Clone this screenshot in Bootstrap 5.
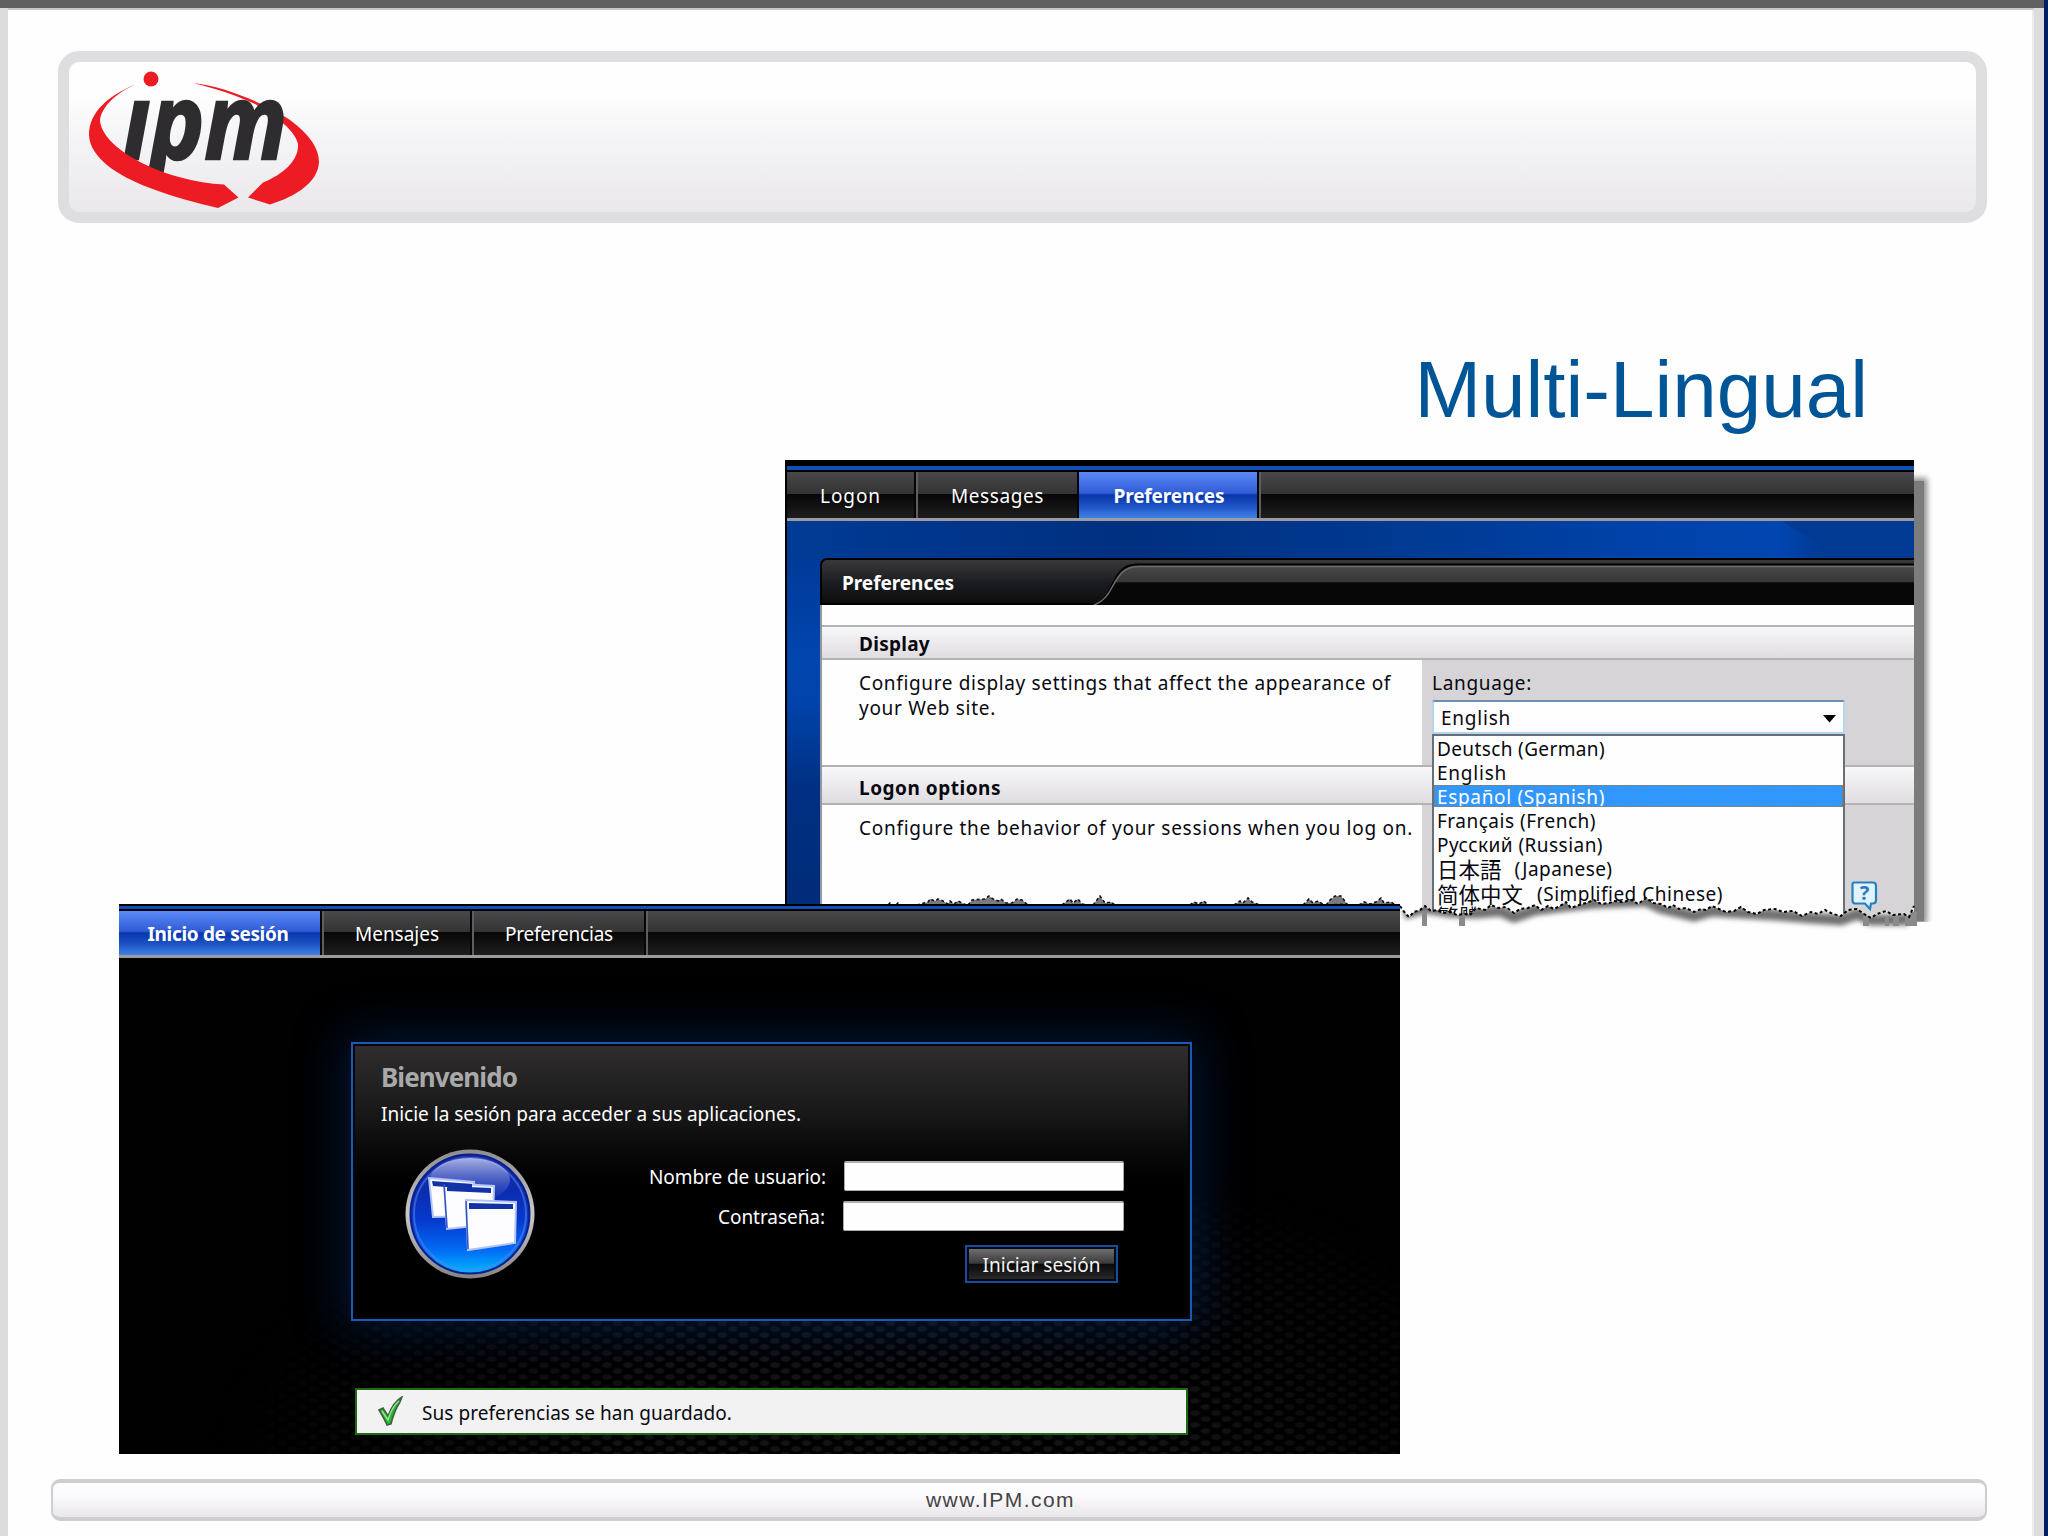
<!DOCTYPE html>
<html lang="en">
<head>
<meta charset="utf-8">
<meta name="viewport" content="width=device-width, initial-scale=1">
<title>Multi-Lingual</title>
<link href="https://cdn.jsdelivr.net/npm/bootstrap@5.3.0/dist/css/bootstrap.min.css" rel="stylesheet">
<style>
  body { margin: 0; background: #fefefe; overflow: hidden; font-family: "Noto Sans", "Noto Sans CJK JP", sans-serif; font-size: 19px; line-height: 24px; color: #08080f; }
  .slide { width: 2048px; height: 1536px; background: #fefefe; border-top: 8px solid #616161; }
  .slide-body { border-left: 8px solid #dcdcdc; border-right: 10px solid #dcdcdc; box-shadow: inset 0 2px 0 #c9c9c9, inset -2px 0 0 #ececec; padding: 43px 47px 15px 43px; }
  .navy-edge { width: 4px; background: #001f60; margin-top: -8px; }
  .banner { height: 172px; margin-left: 7px; border: 11px solid #dedddf; border-radius: 21px; background: linear-gradient(#fefefe 0 22%, #f5f4f6 50%, #eae8eb); }
  .banner svg { margin: -11px 0 0 -11px; }
  .slide-title { font: 80px/92px "Liberation Sans", Arial, sans-serif; color: #005596; margin: 121px 119px 0 0; }
  .footer-bar { height: 42px; border: 3px solid #d0cdd0; border-width: 4px 2px; border-radius: 9px; background: linear-gradient(#fefdff, #fbfafc 35%, #e9e7ea); font: 21px/30px "Liberation Sans", Arial, sans-serif; color: #444; padding: 2px 37px 0 0; }
  .fit { white-space: pre; display: inline-block; }

  .win { position: absolute; overflow: hidden; }
  .win .fit { padding-top: 1px; margin-bottom: -1px; }
  .win-en { left: 785px; top: 460px; width: 1129px; height: 462px; background: #000; border-left: 2px solid #000; }
  .win-es { left: 119px; top: 904px; width: 1281px; height: 550px; background: #000; }
  .win-shadow { position: absolute; left: 1900px; top: 481px; width: 24px; height: 440px; background: #7c7c7c; box-shadow: 0 0 6px 3px #8a8a8a; }

  .tabs { background: linear-gradient(#48484a, #333334 48%, #060608 48%, #1f1e1e); }
  .tabs-en { height: 46px; }
  .tabs-es { height: 44px; }
  .tab-item { color: #fff; justify-content: center; align-items: center; display: flex; border-right: 2px solid #050505; box-shadow: inset 2px 0 0 #5f5f61; text-decoration: none; padding-left: 2px; }
  .tab-item:first-child { box-shadow: none; padding-left: 0; }
  .tab-on { font-weight: 700; background: linear-gradient(#5c8af8, #2f5cd6 46%, #0a35ac 50%, #1d54c4 75%, #4081e6); box-shadow: none; }
  .tab-rest { box-shadow: inset 2px 0 0 #5f5f61; }
  .rule-grey { height: 3px; background: #9a9ca2; }
  .rule-blue { background: #0e50b6; }

  .stage-en { background: linear-gradient(90deg, #003b95, #003080 30%, #003a92 55%, #0042a8 75%, #0045b0 88%, #003a92 92%); padding: 37px 0 0 33px; height: 420px; position: relative; }
  .stage-en::before { content: ""; position: absolute; left: 0; top: 37px; width: 33px; bottom: 0; background: linear-gradient(#003a98, #0045ad 25%, #0044ab 37%, #003083 60%, #002a74); }
  .pane { position: relative; border-left: 2px solid #8f97a5; background: #fefefe; }
  .pane::before { content: ""; position: absolute; left: -2px; top: 0; width: 8px; height: 8px; background: #003b95; }
  .pane-head { height: 47px; margin-left: -2px; background: linear-gradient(#38383b, #1a1c1f 55%, #0b0d0f); border: 2px solid #000; border-right: 0; border-radius: 7px 0 0 0; color: #fff; font-weight: 700; padding-left: 20px; position: relative; }
  .pane-head svg { position: absolute; right: 0; top: 0; }
  .sect-head { border: solid #b4b2b5; border-width: 2px 0; background: linear-gradient(#f8f7f9, #dfdde0); font-weight: 700; padding-left: 37px; display: flex; align-items: center; }
  .sect-text { width: 600px; padding: 10px 0 0 37px; }
  .sect-field { background: #d6d4d7; padding: 10px 0 0 10px; }
  .lang-select { height: 34px; width: 413px; border: 2px solid #b3d6ee; border-top-color: #6d8fae; background: #fefefe; margin-top: 5px; padding: 0 7px 0 7px; border-radius: 2px; }
  .lang-select svg { margin-top: 3px; }
  .lang-menu { position: absolute; left: 610px; top: 176px; width: 413px; height: 190px; background: #fefefe; border: 2px solid #65707c; padding-top: 1px; }
  .lang-menu li { height: 24.1px; padding-left: 3px; line-height: 23px; display: flex; }
  .lang-menu .chosen { background: #3297fd; color: #fff; height: 22px; margin: 0 0 2.1px; line-height: 23px; outline: 1px dashed #a0794f; outline-offset: -1px; }
  .cjk { font-family: "Noto Sans CJK JP", sans-serif; font-size: 21.500px; }
  .cjk-sc { font-family: "Noto Sans CJK SC", sans-serif; }
  .help-icon { position: absolute; left: 1029px; top: 323px; }
  .torn { position: absolute; left: 785px; top: 885px; }

  .stage-es { height: 496px; position: relative; padding-top: 84px; background: #010102; }
  .stage-es::before { content: ""; position: absolute; inset: 200px 0 0 0;
    background: radial-gradient(ellipse 6px 3.6px at 5px 3px, #131313 60%, transparent), radial-gradient(ellipse 6px 3.6px at 15.5px 9px, #131313 60%, transparent);
    background-size: 21px 12px; -webkit-mask-image: radial-gradient(ellipse 680px 320px at 60% 100%, #000 40%, transparent); mask-image: radial-gradient(ellipse 680px 320px at 60% 100%, #000 40%, transparent); }
  .login { position: relative; width: 841px; height: 279px; margin-left: 232px; border: 2px solid #1b58b8; background: linear-gradient(#2f2d2e, #1c1b1c 22%, #0a0a0b 38%, #000 50%); box-shadow: inset 0 0 0 2px #060606, 0 0 46px 8px rgba(0, 50, 115, .42); color: #fff; padding: 17px 28px 0; }
  .login h2 { font-size: 26px; line-height: 30px; font-weight: 700; color: #a9a9a9; margin: 0; }
  .login-form { width: 475px; margin-top: 35px; }
  .login-form .field-box { width: 281px; height: 30px; border: 1px solid #aaa; border-top: 2px solid #b0adb0; border-radius: 2px; background: #fefefe; padding: 0; }
  .btn-login { width: 153px; height: 38px; border: 2px solid #1a4c9e; border-radius: 0; background: linear-gradient(#757575, #3a3a3a 48%, #0a0a0a 50%, #2c2c2c); box-shadow: inset 0 0 0 2px #050912; color: #f2f2f2; padding: 0; font-size: 19px; line-height: 34px; margin: 14px 6px 0 0; }
  .saved { position: relative; width: 833px; height: 47px; margin: 67px 0 0 236px; border: 2px solid #1d6a12; background: #f1f2f1; border-radius: 0; color: #0a0a12; padding: 0 0 0 20px; }
</style>
</head>
<body>
<main class="slide d-flex position-relative">
  <div class="slide-body flex-grow-1 d-flex flex-column">
    <header class="banner">
      <svg width="300" height="170" viewBox="58 51 300 170" role="img" aria-label="ipm">
        <defs><clipPath id="stems"><rect x="100" y="99" width="220" height="80"/></clipPath></defs>
        <path fill="#ed1c24" d="M193 83C225 86 270 106 290 120C309 134 319 148 319 162C318 182 297 196 270 204.500L248 197.500L263 182.500C284 174 299 160 298 144C296 132 276 115 255 104C236 95 214 88 193 83Z"/>
        <g clip-path="url(#stems)"><text x="123" y="158.500" font-family="'Open Sans','Noto Sans',sans-serif" font-weight="700" font-style="italic" font-size="104" fill="#2e2c2f" stroke="#2e2c2f" stroke-width="2.500" textLength="164" lengthAdjust="spacingAndGlyphs">ipm</text></g>
        <path fill="#ed1c24" d="M136 84C108 96 89 112 89 135C90 158 118 176 150 188C174 197 196 203 218 208L238.500 197.500L224 184.500C195 183 167 175 144 164C120 152 102 137 100 121C101 108 114 94 136 84Z"/>
        <circle cx="151" cy="79" r="7.500" fill="#ed1c24"/>
      </svg>
    </header>
    <h1 class="slide-title text-end">Multi-Lingual</h1>
    <footer class="footer-bar mt-auto text-center"><span class="fit" data-w="149">www.IPM.com</span></footer>
  </div>
  <div class="navy-edge"></div>
</main>

<div class="win-shadow"></div>
<section class="win win-en">
  <div style="height:6px"></div>
  <div class="rule-blue" style="height:4px"></div>
  <div style="height:2px"></div>
  <nav class="tabs tabs-en d-flex">
    <a class="tab-item" style="width:129px"><span class="fit" data-w="61">Logon</span></a>
    <a class="tab-item" style="width:163px"><span class="fit" data-w="93">Messages</span></a>
    <a class="tab-item tab-on" style="width:180px"><span class="fit" data-w="111">Preferences</span></a>
    <span class="tab-rest flex-grow-1"></span>
  </nav>
  <div class="rule-grey"></div>
  <div class="stage-en">
    <svg class="position-absolute end-0 top-0" width="132" height="37"><path d="M0 0H132V37H72Q30 20 0 0Z" fill="#003a92"/></svg>
    <div class="pane">
      <div class="pane-head d-flex align-items-center">
        <svg width="822" height="45" viewBox="0 0 822 45">
          <defs><linearGradient id="band" x1="0" y1="0" x2="0" y2="1"><stop offset="0" stop-color="#4a4a4a"/><stop offset=".43" stop-color="#363636"/><stop offset=".44" stop-color="#080808"/><stop offset="1" stop-color="#080608"/></linearGradient></defs>
          <path d="M0 45C24 38 18 5 46 5H822V45Z" fill="url(#band)"/>
          <path d="M2 45C24 37 18 4 46 4.500H822" fill="none" stroke="#000" stroke-width="2"/>
          <path d="M2 45C25 37 19 6.500 47 6.500H822" fill="none" stroke="#6a6a6a" stroke-width="1.500"/>
        </svg>
        <span class="fit" data-w="112">Preferences</span>
      </div>
      <div style="height:20px"></div>
      <div class="sect-head" style="height:35px"><span class="fit" data-w="71">Display</span></div>
      <div class="d-flex" style="height:105px">
        <div class="sect-text"><span class="fit" data-w="532">Configure display settings that affect the appearance of</span><br><span class="fit" data-w="137">your Web site.</span></div>
        <div class="sect-field flex-grow-1">
          <label class="fit" data-w="100">Language:</label>
          <div class="lang-select d-flex align-items-center justify-content-between"><span class="fit" data-w="70">English</span><svg width="13" height="8"><path d="M0 0H13L6.500 7.500Z" fill="#000"/></svg></div>
        </div>
      </div>
      <div class="sect-head" style="height:40px;padding-top:3px"><span class="fit" data-w="142">Logon options</span></div>
      <div class="d-flex" style="height:120px">
        <div class="sect-text"><span class="fit" data-w="554">Configure the behavior of your sessions when you log on.</span></div>
        <div class="sect-field flex-grow-1"></div>
      </div>
      <ul class="lang-menu list-unstyled m-0">
        <li><span class="fit" data-w="168">Deutsch (German)</span></li>
        <li><span class="fit" data-w="70">English</span></li>
        <li class="chosen"><span class="fit" data-w="168">Español (Spanish)</span></li>
        <li><span class="fit" data-w="159">Français (French)</span></li>
        <li><span class="fit" data-w="166">Русский (Russian)</span></li>
        <li><span class="cjk">日本語</span><span class="fit" style="margin-left:13px" data-w="98">(Japanese)</span></li>
        <li><span class="cjk cjk-sc">简体中文</span><span class="fit" style="margin-left:14px" data-w="186">(Simplified Chinese)</span></li>
        <li style="line-height:19px"><span class="cjk">繁體</span></li>
      </ul>
      <svg class="help-icon" width="27" height="30" viewBox="0 0 27 30"><path d="M3 1.500H22Q25 1.500 25 5V19Q25 22.500 22 22.500H20L19 28L14 22.500H4Q1.500 22.500 1.500 19V4Q1.500 1.500 3 1.500Z" fill="#e2f3fd" stroke="#2580c2" stroke-width="2.200"/><text x="13.500" y="19" text-anchor="middle" font-size="20" font-weight="700" fill="#2f78c4">?</text></svg>
    </div>
  </div>
</section>

<!-- ragged lower edge of the English window -->
<svg class="torn" width="1160" height="60" viewBox="785 885 1160 60">
  <defs>
    <clipPath id="under"><path d="M1400 906L1405 913L1409 917L1414 912L1420 910L1425 906L1431 911L1437 910L1443 913L1450 912L1457 915L1464 914L1470 915L1476 908L1485 910L1491 905L1498 908L1506 907L1514 913L1520 909L1528 908L1535 905L1541 910L1548 906L1554 909L1560 906L1566 902L1571 908L1579 905L1586 903L1594 900L1601 904L1609 903L1615 901L1622 902L1632 900L1638 904L1646 898L1653 903L1661 904L1668 908L1673 905L1679 909L1686 908L1694 912L1701 909L1706 910L1712 906L1719 909L1726 912L1734 911L1741 907L1748 912L1757 914L1764 910L1775 909L1783 912L1793 911L1802 916L1811 912L1818 914L1825 910L1833 914L1841 916L1848 910L1857 909L1864 914L1871 918L1877 914L1886 911L1893 915L1904 914L1909 917L1914 906L1945 906V945H1400Z"/></clipPath>
    <filter id="soft" x="-5%" y="-60%" width="110%" height="250%"><feGaussianBlur stdDeviation="2.600"/></filter>
  </defs>
  <g clip-path="url(#under)">
    <path d="M1400 885H1914V945H1400ZM1914 922H1945V945H1914Z" fill="#fefefe"/>
    <g filter="url(#soft)"><path d="M1404 914L1425 908L1450 912L1476 913L1500 911L1514 917L1535 910L1566 906L1594 903L1646 901L1661 908L1694 916L1712 911L1741 913L1775 915L1811 918L1841 920L1857 914L1871 920L1904 920L1914 914" fill="none" stroke="#707070" stroke-width="11"/></g>
    <path d="M1422 912h5v14h-5zM1459 914h6v12h-6zM1863 914h6v12h-6zM1885 917h4v9h-4zM1893 917h6v9h-6zM1905 912h12v14h-12z" fill="#8a8a8a"/>
  </g>
  <path d="M1400 906L1405 913L1409 917L1414 912L1420 910L1425 906L1431 911L1437 910L1443 913L1450 912L1457 915L1464 914L1470 915L1476 908L1485 910L1491 905L1498 908L1506 907L1514 913L1520 909L1528 908L1535 905L1541 910L1548 906L1554 909L1560 906L1566 902L1571 908L1579 905L1586 903L1594 900L1601 904L1609 903L1615 901L1622 902L1632 900L1638 904L1646 898L1653 903L1661 904L1668 908L1673 905L1679 909L1686 908L1694 912L1701 909L1706 910L1712 906L1719 909L1726 912L1734 911L1741 907L1748 912L1757 914L1764 910L1775 909L1783 912L1793 911L1802 916L1811 912L1818 914L1825 910L1833 914L1841 916L1848 910L1857 909L1864 914L1871 918L1877 914L1886 911L1893 915L1904 914L1909 917L1914 906" fill="none" stroke="#000" stroke-width="2" stroke-dasharray="3 2.500"/>
  <path d="M917 905L928 902L930 899L935 901L938 899L943 901L948 904L950 901L954 904L958 901L966 905ZM968 905L972 900L985 899L989 896L993 899L998 901L1001 899L1006 903L1012 903L1017 899L1022 900L1028 905ZM1062 905L1070 899L1073 903L1078 899L1082 904L1087 905ZM1093 905L1100 896L1105 903L1111 902L1115 905ZM1190 905L1194 902L1199 904L1204 901L1208 905ZM1234 905L1240 901L1243 903L1248 898L1252 902L1260 905ZM1303 905L1309 899L1313 903L1318 901L1324 905ZM1326 905L1330 900L1335 896L1341 896L1347 904ZM1359 905L1364 902L1370 904L1376 902L1381 898L1384 903L1391 902L1395 905ZM888 905l2-2 2 2zM896 905l2-2 2 2z" fill="#7b7b7b" stroke="#111" stroke-width="1.600" stroke-dasharray="3 2.500"/>
</svg>

<section class="win win-es" lang="es">
  <div style="height:2px"></div>
  <div class="rule-blue" style="height:3px"></div>
  <div style="height:2px"></div>
  <nav class="tabs tabs-es d-flex">
    <a class="tab-item tab-on" style="width:203px;padding-right:3px"><span class="fit" data-w="141">Inicio de sesión</span></a>
    <a class="tab-item" style="width:150px"><span class="fit" data-w="84">Mensajes</span></a>
    <a class="tab-item" style="width:174px"><span class="fit" data-w="108">Preferencias</span></a>
    <span class="tab-rest flex-grow-1"></span>
  </nav>
  <div class="rule-grey"></div>
  <div class="stage-es">
    <div class="login">
      <h2><span class="fit" data-w="136">Bienvenido</span></h2>
      <p class="m-0" style="padding-top:9px"><span class="fit" data-w="420">Inicie la sesión para acceder a sus aplicaciones.</span></p>
      <div class="d-flex justify-content-between">
        <svg width="132" height="132" viewBox="-66 -66 132 132" style="margin:22px 0 0 23px">
          <defs>
            <linearGradient id="orb" x1="0" y1="0" x2="0" y2="1"><stop offset="0" stop-color="#1d2fa8"/><stop offset=".3" stop-color="#0b2cae"/><stop offset=".55" stop-color="#0639cc"/><stop offset=".8" stop-color="#006af4"/><stop offset="1" stop-color="#00b8fc"/></linearGradient>
            <linearGradient id="gloss" x1="0" y1="0" x2="0" y2="1"><stop offset="0" stop-color="#c3c8ee" stop-opacity=".85"/><stop offset="1" stop-color="#5068cc" stop-opacity=".05"/></linearGradient>
            <linearGradient id="rim" x1="0" y1="0" x2="0" y2="1"><stop offset="0" stop-color="#8d8d8d"/><stop offset=".5" stop-color="#c9c9c9"/><stop offset="1" stop-color="#858585"/></linearGradient>
          </defs>
          <circle r="64.500" fill="url(#rim)"/>
          <circle r="59.500" fill="url(#orb)" stroke="#0c1e8c" stroke-width="2"/>
          <circle r="56" fill="none" stroke="#5b86ee" stroke-opacity=".55" stroke-width="2"/>
          <ellipse cy="-34" rx="40" ry="22" fill="url(#gloss)"/>
          <g fill="#fdfdff" stroke="#b3c4f5" stroke-width="2">
            <path d="M-41-36L4-32L5 2L-37 3Z"/><path d="M-26-31L24-28L23 10L-23 15Z"/><path d="M-4-14L46-12L45 29L-2 36Z"/>
          </g>
          <path d="M-38-33L2-30V-25L-37-28ZM-23-28L21-26V-21L-23-23ZM-1-11L43-10V-5L-1-5Z" fill="#1233a6"/>
          <path d="M-26-30L-23 14M-4-13L-2 35" stroke="#3157c4" stroke-width="1.500"/>
        </svg>
        <div class="login-form" style="margin-right:38px">
          <div class="d-flex align-items-center justify-content-end" style="gap:18px"><label class="fit" data-w="177">Nombre de usuario:</label><input class="form-control field-box" type="text" aria-label="Nombre de usuario"></div>
          <div class="d-flex align-items-center justify-content-end" style="gap:18px;margin-top:10px"><label class="fit" data-w="107">Contraseña:</label><input class="form-control field-box" type="password" aria-label="Contraseña"></div>
          <div class="text-end"><button class="btn btn-login" type="button"><span class="fit" data-w="118">Iniciar sesión</span></button></div>
        </div>
      </div>
    </div>
    <div class="saved alert d-flex align-items-center mb-0">
      <svg width="27" height="30" viewBox="0 0 27 30" style="margin-top:-2px"><path d="M2 14L6 12L11 20C14 12 18 5 25 1L23 6C19 12 16 20 14 28L10 29C8 24 5 19 2 14Z" fill="#27b52c" stroke="#3f5f3f" stroke-width="1.500"/><path d="M5 15L11 24C13 17 17 9 22 5" fill="none" stroke="#8fe88d" stroke-width="1.500"/></svg>
      <span class="fit" style="margin-left:18px" data-w="310">Sus preferencias se han guardado.</span>
    </div>
  </div>
</section>

<script src="https://cdn.jsdelivr.net/npm/bootstrap@5.3.0/dist/js/bootstrap.bundle.min.js"></script>
<script>
  document.querySelectorAll('.fit').forEach(function (el) {
    var natural = el.getBoundingClientRect().width;
    el.style.letterSpacing = ((Number(el.dataset.w) - natural) / el.textContent.length).toFixed(3) + 'px';
  });
</script>
</body>
</html>
